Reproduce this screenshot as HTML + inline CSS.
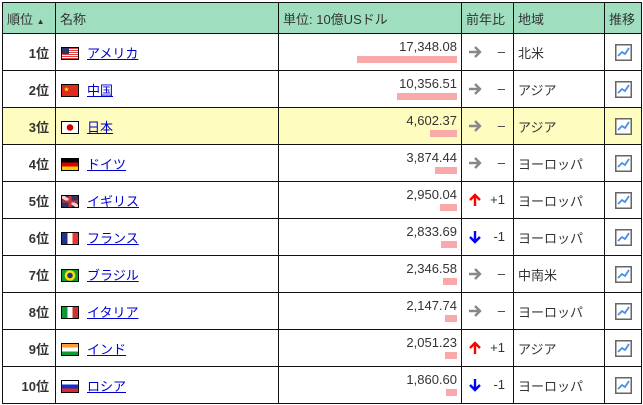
<!DOCTYPE html>
<html><head><meta charset="utf-8"><style>
body{margin:0;background:#fff;font-family:"Liberation Sans","Noto Sans CJK JP",sans-serif;font-size:13px;color:#333;}
table{position:absolute;left:2px;top:2px;border-collapse:collapse;table-layout:fixed;width:639px;}
td,th{border:1px solid #111;padding:0;overflow:hidden;white-space:nowrap;}
th{background:#9fdfbf;font-weight:normal;text-align:left;height:30px;padding-left:4px;color:#333;}
td{height:36px;}
tr.hl td{background:#fffcbf;}
.rk{text-align:right;padding-right:6px;font-weight:bold;}
.nm{padding-left:5px;}
.fl{display:inline-block;width:16px;height:11px;border:1px solid #000;vertical-align:-2px;margin-right:8px;overflow:hidden;position:relative;}
a{color:#00c;text-decoration:underline;}
.val{text-align:right;padding-right:4px;position:relative;vertical-align:top;}
.val span{display:block;margin-top:5px;line-height:15px;}
.bar{position:absolute;right:4px;top:22px;height:7px;background:#f9a9a9;}
.ch{position:relative;}
.ch svg{position:absolute;left:6px;top:11px;}
.ch .d{position:absolute;right:8px;top:10px;}
.rg{padding-left:4px;}
.ic{text-align:center;}
.ic svg{vertical-align:middle;}
</style></head><body>
<svg width="0" height="0" style="position:absolute"><defs>
<symbol id="r" viewBox="0 0 14 14"><path d="M1 7H12M7 2L12 7L7 12" stroke="#888" stroke-width="2.4" fill="none"/></symbol>
<symbol id="u" viewBox="0 0 14 14"><path d="M7 13V2M2 7L7 2L12 7" stroke="#f00" stroke-width="2.4" fill="none"/></symbol>
<symbol id="dn" viewBox="0 0 14 14"><path d="M7 1V12M2 7L7 12L12 7" stroke="#00f" stroke-width="2.4" fill="none"/></symbol>
<symbol id="c" viewBox="0 0 17 17"><rect x=".75" y=".75" width="15.5" height="15.5" fill="#fff" stroke="#666" stroke-width="1.5"/><path d="M3 12 L7 8 L10 10 L14 4" stroke="#4a8ee8" stroke-width="1.8" fill="none"/></symbol>
</defs></svg>
<table>
<colgroup><col style="width:53px"><col style="width:223px"><col style="width:183px"><col style="width:52px"><col style="width:91px"><col style="width:37px"></colgroup>
<tr><th>順位 <span style="font-size:8px">▲</span></th><th>名称</th><th>単位: 10億USドル</th><th>前年比</th><th>地域</th><th>推移</th></tr>
<tr><td class="rk">1位</td><td class="nm"><span class="fl" style="background:repeating-linear-gradient(#d44 0 1px,#fff 1px 2px)"><i style="position:absolute;left:0;top:0;width:7px;height:6px;background:#336"></i></span><a>アメリカ</a></td><td class="val"><span>17,348.08</span><div class="bar" style="width:100px"></div></td><td class="ch"><svg width="14" height="14"><use href="#r"/></svg><span class="d">–</span></td><td class="rg">北米</td><td class="ic"><svg width="17" height="17"><use href="#c"/></svg></td></tr>
<tr><td class="rk">2位</td><td class="nm"><span class="fl" style="background:#e02a1a"><i style="position:absolute;left:2px;top:1px;color:#ff0;font-size:5px;font-style:normal">★</i></span><a>中国</a></td><td class="val"><span>10,356.51</span><div class="bar" style="width:60px"></div></td><td class="ch"><svg width="14" height="14"><use href="#r"/></svg><span class="d">–</span></td><td class="rg">アジア</td><td class="ic"><svg width="17" height="17"><use href="#c"/></svg></td></tr>
<tr class="hl"><td class="rk">3位</td><td class="nm"><span class="fl" style="background:radial-gradient(circle,#c00 0 3px,#fff 3.5px)"></span><a>日本</a></td><td class="val"><span>4,602.37</span><div class="bar" style="width:27px"></div></td><td class="ch"><svg width="14" height="14"><use href="#r"/></svg><span class="d">–</span></td><td class="rg">アジア</td><td class="ic"><svg width="17" height="17"><use href="#c"/></svg></td></tr>
<tr><td class="rk">4位</td><td class="nm"><span class="fl" style="background:linear-gradient(#000 0 33%,#d00 33% 66%,#fc0 66%)"></span><a>ドイツ</a></td><td class="val"><span>3,874.44</span><div class="bar" style="width:22px"></div></td><td class="ch"><svg width="14" height="14"><use href="#r"/></svg><span class="d">–</span></td><td class="rg">ヨーロッパ</td><td class="ic"><svg width="17" height="17"><use href="#c"/></svg></td></tr>
<tr><td class="rk">5位</td><td class="nm"><span class="fl" style="background:linear-gradient(#fff0 40%,#c33 40% 60%,#fff0 60%),linear-gradient(90deg,#fff0 42%,#c33 42% 58%,#fff0 58%),linear-gradient(33deg,#336 40%,#fcc 40% 60%,#336 60%)"></span><a>イギリス</a></td><td class="val"><span>2,950.04</span><div class="bar" style="width:17px"></div></td><td class="ch"><svg width="14" height="14"><use href="#u"/></svg><span class="d">+1</span></td><td class="rg">ヨーロッパ</td><td class="ic"><svg width="17" height="17"><use href="#c"/></svg></td></tr>
<tr><td class="rk">6位</td><td class="nm"><span class="fl" style="background:linear-gradient(90deg,#238 0 33%,#fff 33% 66%,#e33 66%)"></span><a>フランス</a></td><td class="val"><span>2,833.69</span><div class="bar" style="width:16px"></div></td><td class="ch"><svg width="14" height="14"><use href="#dn"/></svg><span class="d">-1</span></td><td class="rg">ヨーロッパ</td><td class="ic"><svg width="17" height="17"><use href="#c"/></svg></td></tr>
<tr><td class="rk">7位</td><td class="nm"><span class="fl" style="background:radial-gradient(circle,#238 0 2.5px,#fd0 3px 5px,#193 5.5px)"></span><a>ブラジル</a></td><td class="val"><span>2,346.58</span><div class="bar" style="width:14px"></div></td><td class="ch"><svg width="14" height="14"><use href="#r"/></svg><span class="d">–</span></td><td class="rg">中南米</td><td class="ic"><svg width="17" height="17"><use href="#c"/></svg></td></tr>
<tr><td class="rk">8位</td><td class="nm"><span class="fl" style="background:linear-gradient(90deg,#193 0 33%,#fff 33% 66%,#c33 66%)"></span><a>イタリア</a></td><td class="val"><span>2,147.74</span><div class="bar" style="width:12px"></div></td><td class="ch"><svg width="14" height="14"><use href="#r"/></svg><span class="d">–</span></td><td class="rg">ヨーロッパ</td><td class="ic"><svg width="17" height="17"><use href="#c"/></svg></td></tr>
<tr><td class="rk">9位</td><td class="nm"><span class="fl" style="background:linear-gradient(#f93 0 33%,#fff 33% 66%,#193 66%)"></span><a>インド</a></td><td class="val"><span>2,051.23</span><div class="bar" style="width:12px"></div></td><td class="ch"><svg width="14" height="14"><use href="#u"/></svg><span class="d">+1</span></td><td class="rg">アジア</td><td class="ic"><svg width="17" height="17"><use href="#c"/></svg></td></tr>
<tr><td class="rk">10位</td><td class="nm"><span class="fl" style="background:linear-gradient(#fff 0 33%,#13c 33% 66%,#e22 66%)"></span><a>ロシア</a></td><td class="val"><span>1,860.60</span><div class="bar" style="width:11px"></div></td><td class="ch"><svg width="14" height="14"><use href="#dn"/></svg><span class="d">-1</span></td><td class="rg">ヨーロッパ</td><td class="ic"><svg width="17" height="17"><use href="#c"/></svg></td></tr>
</table>
</body></html>
